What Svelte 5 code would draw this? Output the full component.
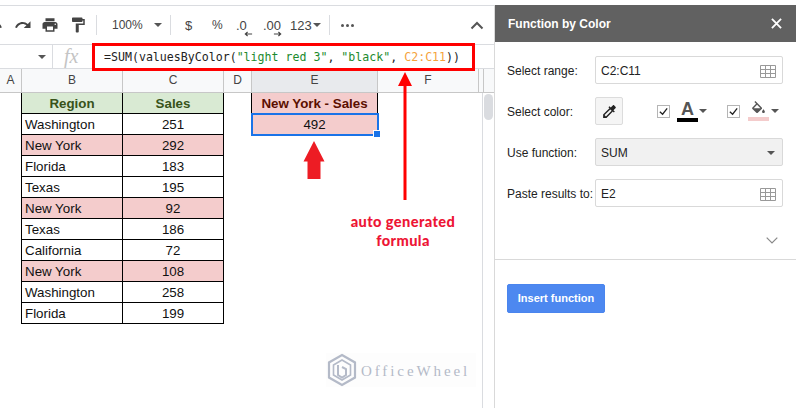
<script>
  const columns = [
    { name: "A", width: 22 },
    { name: "B", width: 101 },
    { name: "C", width: 101 },
    { name: "D", width: 28 },
    { name: "E", width: 126, active: true },
    { name: "F", width: 101 },
  ];
  const rows = [
    ["Washington", 251],
    ["New York", 292, true],
    ["Florida", 183],
    ["Texas", 195],
    ["New York", 92, true],
    ["Texas", 186],
    ["California", 72],
    ["New York", 108, true],
    ["Washington", 258],
    ["Florida", 199],
  ];
</script>

<main>
  <section class="sheet">
    <div class="toolbar">
      <svg class="undo" viewBox="0 0 24 24" width="18" height="18"><path d="M12.5 8c-2.65 0-5.05.99-6.9 2.6L2 7v9h9l-3.62-3.62c1.39-1.16 3.16-1.88 5.12-1.88 3.54 0 6.55 2.31 7.6 5.5l2.37-.78C21.08 11.03 17.15 8 12.5 8z"/></svg>
      <svg class="tool redo" viewBox="0 0 24 24" width="18" height="18"><path d="M18.4 10.6C16.55 8.99 14.15 8 11.5 8c-4.65 0-8.58 3.03-9.96 7.22L3.9 16c1.05-3.19 4.05-5.5 7.6-5.5 1.95 0 3.73.72 5.12 1.88L13 16h9V7l-3.6 3.6z"/></svg>
      <svg class="tool print" viewBox="0 0 24 24" width="18" height="18"><path d="M19 8H5c-1.66 0-3 1.34-3 3v6h4v4h12v-4h4v-6c0-1.66-1.34-3-3-3zm-3 11H8v-5h8v5zm3-7c-.55 0-1-.45-1-1s.45-1 1-1 1 .45 1 1-.45 1-1 1zm-1-9H6v4h12V3z"/></svg>
      <svg class="tool paint" viewBox="0 0 24 24" width="18" height="18"><path d="M18 4V3c0-.55-.45-1-1-1H5c-.55 0-1 .45-1 1v4c0 .55.45 1 1 1h12c.55 0 1-.45 1-1V6h1v4H9v11c0 .55.45 1 1 1h2c.55 0 1-.45 1-1v-9h8V4h-3z"/></svg>
      <span class="sep first"></span>
      <span class="zoom">100%</span>
      <span class="caret zoom-caret"></span>
      <span class="sep second"></span>
      <span class="money">$</span>
      <span class="percent">%</span>
      <span class="dec less">.0
        <svg viewBox="0 0 10 6" width="9" height="6"><path d="M9 3H2M4 .8 1.500 3 4 5.200" fill="none" stroke="#444" stroke-width="1.300"/></svg>
      </span>
      <span class="dec more">.00
        <svg viewBox="0 0 10 6" width="9" height="6"><path d="M1 3h7M6 .8 8.500 3 6 5.200" fill="none" stroke="#444" stroke-width="1.300"/></svg>
      </span>
      <span class="fmt">123</span>
      <span class="caret fmt-caret"></span>
      <span class="sep third"></span>
      <span class="more-dots"><i></i><i></i><i></i></span>
      <svg class="collapse" viewBox="0 0 14 9" width="14" height="9"><path d="M1.500 7.500 7 2l5.500 5.500" fill="none" stroke="#555" stroke-width="2"/></svg>
    </div>

    <div class="formula-bar">
      <div class="name-box"><span class="caret"></span></div>
      <div class="fx">fx</div>
      <div class="formula">=SUM(valuesByColor(<span class="str">"light red 3"</span>, <span class="str">"black"</span>, <span class="range">C2:C11</span>))</div>
      <span class="red-box"></span>
    </div>

    <div class="col-head">
      {#each columns as c}
        <div class="col" class:active={c.active} style="width:{c.width}px">{c.name}</div>
      {/each}
      <div class="col-gap"></div>
    </div>

    <div class="grid-area">
      <div class="cells">
        <div class="table data">
          <div class="cell head">Region</div>
          <div class="cell head center">Sales</div>
          {#each rows as r}
            <div class="cell" class:pink={r[2]}>{r[0]}</div>
            <div class="cell center" class:pink={r[2]}>{r[1]}</div>
          {/each}
        </div>
        <div class="table result">
          <div class="cell result-head center">New York - Sales</div>
          <div class="cell pink center selected">492<span class="handle"></span></div>
        </div>
        <div class="note">auto generated<br />formula</div>
        <svg class="big-arrow" viewBox="0 0 22 38" width="22" height="38"><path d="M11 0 21.500 20.500H17.500V38H4.500V20.500H.5z" fill="#ed1c24"/></svg>
        <svg class="long-arrow" viewBox="0 0 16 130" width="16" height="130"><path d="M8 0 15 14H9.500V128H6.500V14H1z" fill="#f00"/></svg>
        <div class="watermark">
          <svg viewBox="0 0 32 34" width="32" height="34" fill="none" stroke="#b4bac8" stroke-width="2.200">
            <path d="M16 2 29 9.500V24.500L16 32 3 24.500V9.500z"/>
            <path d="M16 7 24.500 12V22L16 27 7.500 22V12z" stroke-width="1.600"/>
            <path d="M12 12V22L16 24.500 20 22V16L16 14" stroke-width="2"/>
          </svg>
          <span>OfficeWheel</span>
        </div>
      </div>
      <div class="scrollbar"><span class="thumb"></span></div>
    </div>
  </section>

  <aside class="panel">
    <header>
      <span>Function by Color</span>
      <svg viewBox="0 0 12 12" width="11" height="11"><path d="M1 1 11 11M11 1 1 11" stroke="#fff" stroke-width="2"/></svg>
    </header>
    <div class="form">
      <div class="field">
        <label>Select range:</label>
        <div class="input">C2:C11
          <svg class="grid-icon" viewBox="0 0 16 13" width="16" height="13"><path d="M.5.5h15v12H.5zM.5 4.500h15M.5 8.500h15M5.500.5v12M10.500.5v12" fill="none" stroke="#999"/></svg>
        </div>
      </div>
      <div class="field">
        <label>Select color:</label>
        <div class="picker">
          <svg viewBox="0 0 24 24" width="17" height="17"><path d="M20.710 5.630l-2.340-2.340c-.39-.39-1.020-.39-1.410 0l-3.120 3.120-1.930-1.910-1.410 1.410 1.420 1.420L3 16.250V21h4.750l8.920-8.920 1.420 1.420 1.410-1.410-1.920-1.920 3.120-3.120c.4-.4.4-1.030.01-1.420zM6.920 19L5 17.080l8.060-8.060 1.920 1.920L6.920 19z" fill="#222"/></svg>
        </div>
        <span class="check"><svg viewBox="0 0 12 12" width="11" height="11"><path d="M2 6.200 5 9l5-6.500" fill="none" stroke="#222" stroke-width="1.400"/></svg></span>
        <span class="letter">A<i></i></span>
        <span class="caret"></span>
        <span class="check second-check"><svg viewBox="0 0 12 12" width="11" height="11"><path d="M2 6.200 5 9l5-6.500" fill="none" stroke="#222" stroke-width="1.400"/></svg></span>
        <span class="bucket">
          <svg viewBox="0 0 24 21" width="17" height="15"><path fill-rule="evenodd" d="M16.560 8.940L7.620 0 6.210 1.410l2.380 2.380-5.150 5.150c-.59.59-.59 1.540 0 2.120l5.500 5.500c.29.29.68.44 1.060.44s.77-.15 1.060-.44l5.500-5.500c.59-.58.59-1.530 0-2.120zM5.210 10L10 5.210 14.790 10H5.210zM19 11.500s-2 2.170-2 3.500c0 1.100.9 2 2 2s2-.9 2-2c0-1.330-2-3.500-2-3.500z" fill="#555"/></svg>
          <i></i>
        </span>
        <span class="caret"></span>
      </div>
      <div class="field">
        <label>Use function:</label>
        <div class="input select">SUM<span class="caret"></span></div>
      </div>
      <div class="field">
        <label>Paste results to:</label>
        <div class="input">E2
          <svg class="grid-icon" viewBox="0 0 16 13" width="16" height="13"><path d="M.5.5h15v12H.5zM.5 4.500h15M.5 8.500h15M5.500.5v12M10.500.5v12" fill="none" stroke="#999"/></svg>
        </div>
      </div>
      <svg class="expand" viewBox="0 0 12 7" width="12" height="7"><path d="M.7.7 6 6 11.300.7" fill="none" stroke="#888" stroke-width="1.200"/></svg>
    </div>
    <div class="actions">
      <button>Insert function</button>
    </div>
  </aside>
</main>

<style>
  :global(body) {
    margin: 0;
    background: #fff;
  }

  main {
    width: 796px;
    height: 408px;
    display: flex;
    overflow: hidden;
    font-family: "Liberation Sans", Arial, sans-serif;
    color: #222;
    padding-top: 5px;
    box-sizing: border-box;
  }

  .sheet {
    width: 494px;
    flex: none;
    display: flex;
    flex-direction: column;
    border-top: 1px solid #dadce0;
    box-sizing: border-box;
  }

  .toolbar {
    height: 38px;
    display: flex;
    align-items: center;
    position: relative;
    flex: none;
    color: #444;
  }

  .toolbar svg path {
    fill: #444;
  }

  .toolbar .dec svg path,
  .toolbar .collapse path {
    fill: none;
  }

  .undo {
    margin-left: -15px;
    flex: none;
  }

  .tool {
    flex: none;
  }

  .redo { margin-left: 11px; }
  .print { margin-left: 9px; }
  .paint { margin-left: 10px; }

  .sep {
    width: 1px;
    height: 20px;
    background: #dadce0;
    flex: none;
  }

  .first { margin-left: 9px; }

  .zoom {
    font-size: 12px;
    margin-left: 15px;
    width: 30px;
  }

  .caret {
    width: 0;
    height: 0;
    border-left: 4px solid transparent;
    border-right: 4px solid transparent;
    border-top: 4px solid #555;
    flex: none;
  }

  .zoom-caret { margin-left: 12px; }
  .second { margin-left: 8px; }

  .money {
    font-size: 13px;
    margin-left: 14px;
    width: 8px;
  }

  .percent {
    font-size: 12px;
    margin-left: 19px;
    width: 11px;
  }

  .dec {
    font-size: 13px;
    position: relative;
    flex: none;
  }

  .dec svg {
    position: absolute;
    top: 13px;
  }

  .less { margin-left: 13px; width: 11px; }
  .less svg { left: 8px; }
  .more { margin-left: 16px; width: 18px; }
  .more svg { left: 10px; }

  .fmt {
    font-size: 13px;
    margin-left: 9px;
    width: 22px;
  }

  .fmt-caret { margin-left: 1px; }
  .third { margin-left: 8px; }

  .more-dots {
    display: flex;
    gap: 2px;
    margin-left: 11px;
  }

  .more-dots i {
    width: 3px;
    height: 3px;
    border-radius: 50%;
    background: #555;
  }

  .collapse {
    margin-left: 116px;
    flex: none;
  }

  .formula-bar {
    height: 23px;
    display: flex;
    align-items: center;
    position: relative;
    border-top: 1px solid #dadce0;
    border-bottom: 1px solid #dadce0;
    flex: none;
  }

  .name-box {
    width: 53px;
    height: 100%;
    display: flex;
    align-items: center;
    justify-content: flex-end;
    padding-right: 6px;
    box-sizing: border-box;
    border-right: 1px solid #dadce0;
    flex: none;
  }

  .fx {
    width: 50px;
    padding-left: 11px;
    box-sizing: border-box;
    font-family: "Liberation Serif", serif;
    font-style: italic;
    font-size: 20px;
    color: #c4c4c4;
    flex: none;
  }

  .formula {
    font-family: "DejaVu Sans Mono", monospace;
    font-size: 11.6px;
    color: #222;
    white-space: nowrap;
    margin-left: 1px;
  }

  .str { color: #1c8a2e; }
  .range { color: #f5a33c; }

  .red-box {
    position: absolute;
    left: 92px;
    top: -2px;
    width: 383px;
    height: 28px;
    border: 3px solid #f00;
    box-sizing: border-box;
  }

  .col-head {
    height: 23px;
    display: flex;
    background: #f8f9fa;
    border-bottom: 1px solid #c7c7c7;
    flex: none;
  }

  .col {
    height: 100%;
    box-sizing: border-box;
    border-right: 1px solid #c7c7c7;
    font-size: 12px;
    line-height: 23px;
    text-align: center;
    color: #444;
  }

  .col.active { background: #e8eaed; }

  .col-gap {
    width: 4px;
    border-right: 1px solid #c7c7c7;
  }

  .grid-area {
    flex: 1;
    display: flex;
    min-height: 0;
  }

  .cells {
    flex: 1;
    position: relative;
    display: flex;
    align-items: flex-start;
    padding-left: 21px;
  }

  .table {
    display: grid;
    border-left: 1px solid #000;
    font-size: 13.33px;
  }

  .data {
    grid-template-columns: 101px 101px;
  }

  .result {
    grid-template-columns: 126px;
    margin-left: 27px;
  }

  .cell {
    height: 21px;
    line-height: 21px;
    box-sizing: border-box;
    border-right: 1px solid #000;
    border-bottom: 1px solid #000;
    padding-left: 3px;
    color: #111;
    white-space: nowrap;
    position: relative;
  }

  .center {
    text-align: center;
    padding-left: 0;
  }

  .head {
    background: #d9ead3;
    color: #38531a;
    font-weight: 700;
    text-align: center;
    padding-left: 0;
  }

  .result-head {
    background: #f4cccc;
    color: #5b0f00;
    font-weight: 700;
  }

  .pink { background: #f4cccc; }

  .selected {
    outline: 2px solid #1a73e8;
    outline-offset: -1px;
    z-index: 1;
  }

  .handle {
    position: absolute;
    right: -3px;
    bottom: -3px;
    width: 6px;
    height: 6px;
    background: #1a73e8;
    outline: 1px solid #fff;
  }

  .note {
    position: absolute;
    left: 330px;
    top: 119px;
    width: 146px;
    text-align: center;
    font-family: Lato, sans-serif;
    font-weight: 900;
    font-size: 14.6px;
    line-height: 19px;
    color: #ed1535;
    letter-spacing: .4px;
  }

  .big-arrow {
    position: absolute;
    left: 303px;
    top: 48px;
  }

  .long-arrow {
    position: absolute;
    left: 397px;
    top: -21px;
  }

  .watermark {
    position: absolute;
    left: 326px;
    top: 260px;
    display: flex;
    align-items: center;
    gap: 3px;
    width: 150px;
    background: #fdfdfd;
  }

  .watermark span {
    font-family: "Liberation Serif", serif;
    font-size: 15px;
    letter-spacing: 2.9px;
    color: #b4bac8;
    margin-top: 2px;
  }

  .scrollbar {
    width: 12px;
    border-left: 1px solid #dadce0;
    flex: none;
    padding: 1px 1px 0 1px;
    box-sizing: border-box;
  }

  .thumb {
    display: block;
    height: 26px;
    border-radius: 5px;
    background: #dadce0;
  }

  .panel {
    flex: 1;
    display: flex;
    flex-direction: column;
    border-left: 1px solid #d9d9d9;
  }

  .panel header {
    height: 37px;
    background: #616161;
    color: #fff;
    font-size: 12px;
    font-weight: 700;
    display: flex;
    align-items: center;
    justify-content: space-between;
    padding: 0 14px 0 13px;
    flex: none;
  }

  .form {
    height: 218px;
    padding: 14px 13px 0 12px;
    box-sizing: border-box;
    border-bottom: 1px solid #d9d9d9;
    display: flex;
    flex-direction: column;
    gap: 13px;
    position: relative;
    flex: none;
  }

  .field {
    display: flex;
    align-items: center;
    height: 28px;
    flex: none;
  }

  label {
    width: 88px;
    font-size: 12px;
    color: #222;
    flex: none;
    white-space: nowrap;
    padding-top: 2px;
  }

  .input {
    flex: 1;
    height: 28px;
    border: 1px solid #d9d9d9;
    border-radius: 2px;
    box-sizing: border-box;
    display: flex;
    align-items: center;
    justify-content: space-between;
    padding: 2px 6px 0 5px;
    font-size: 12px;
    color: #222;
  }

  .select {
    background: #f1f1f1;
    padding-right: 7px;
  }

  .picker {
    width: 28px;
    height: 28px;
    box-sizing: border-box;
    background: #f5f5f5;
    border: 1px solid #dcdcdc;
    border-radius: 2px;
    display: flex;
    align-items: center;
    justify-content: center;
    flex: none;
  }

  .check {
    width: 13px;
    height: 13px;
    border: 1px solid #b5b5b5;
    box-sizing: border-box;
    display: flex;
    align-items: center;
    justify-content: center;
    margin-left: 34px;
    flex: none;
  }

  .check svg {
    flex: none;
  }

  .second-check { margin-left: 20px; }

  .letter {
    width: 21px;
    margin-left: 7px;
    font-size: 18px;
    font-weight: 700;
    line-height: 17px;
    text-align: center;
    color: #555;
    flex: none;
    margin-right: 1px;
  }

  .letter i {
    display: block;
    height: 4px;
    background: #000;
  }

  .bucket {
    width: 21px;
    margin-left: 8px;
    margin-right: 2px;
    flex: none;
    display: flex;
    flex-direction: column;
    align-items: center;
  }

  .bucket svg {
    margin-bottom: 1px;
  }

  .bucket i {
    display: block;
    width: 100%;
    height: 4px;
    background: #f4cccc;
  }

  .expand {
    position: absolute;
    right: 18px;
    bottom: 15px;
  }

  .actions {
    padding: 24px 12px;
  }

  button {
    width: 98px;
    height: 29px;
    background: #4d88f0;
    border: 1px solid #4a85ee;
    border-radius: 2px;
    color: #fff;
    font-family: inherit;
    font-size: 11px;
    font-weight: 700;
    padding: 0 0 2px;
  }
</style>
